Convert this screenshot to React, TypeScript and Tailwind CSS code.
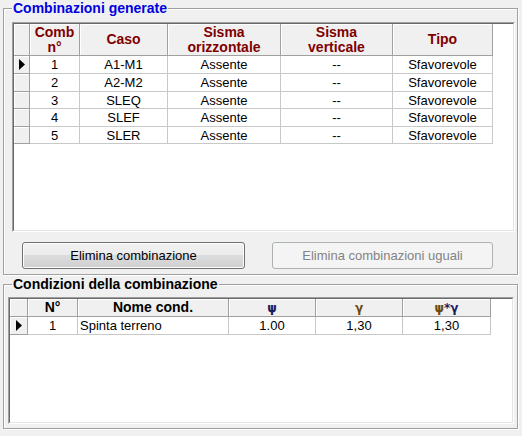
import React from "react";

type Col = { w: string; label: React.ReactNode; align?: string };

const combCols: Col[] = [
  { w: "w-[50px]", label: <>Comb<br />n°</> },
  { w: "w-[88px]", label: "Caso" },
  { w: "w-[113px]", label: <>Sisma<br />orizzontale</> },
  { w: "w-[112px]", label: <>Sisma<br />verticale</> },
  { w: "w-[100px]", label: "Tipo" },
];

const combRows = [
  ["1", "A1-M1", "Assente", "--", "Sfavorevole"],
  ["2", "A2-M2", "Assente", "--", "Sfavorevole"],
  ["3", "SLEQ", "Assente", "--", "Sfavorevole"],
  ["4", "SLEF", "Assente", "--", "Sfavorevole"],
  ["5", "SLER", "Assente", "--", "Sfavorevole"],
];
const combRowH = ["h-[18px]", "h-[18px]", "h-[17px]", "h-[18px]", "h-[17px]"];

const greek = "font-['DejaVu_Sans',sans-serif] text-[12px]";

const condCols: Col[] = [
  { w: "w-[50px]", label: "N°" },
  { w: "w-[151px]", label: "Nome cond.", align: "justify-start pl-[2px]" },
  { w: "w-[87px]", label: <span className={`${greek} text-[#1c1c60]`}>ψ</span> },
  { w: "w-[87px]", label: <span className={`${greek} text-[#6a4a10]`}>γ</span> },
  {
    w: "w-[88px]",
    label: (
      <span className={greek}>
        <span className="text-[#6a4a10]">ψ</span>
        <span className="text-[#1c1c60]">*</span>
        <span className="text-[#1c1c60]">γ</span>
      </span>
    ),
  },
];

const condRows = [["1", "Spinta terreno", "1.00", "1,30", "1,30"]];

function Arrow() {
  return (
    <svg width="6" height="11" viewBox="0 0 6 11">
      <polygon points="0,0 6,5.5 0,11" fill="#000" />
    </svg>
  );
}

function Grid({
  cols,
  rows,
  indW,
  headH,
  rowH,
  headColor,
  className,
}: {
  cols: Col[];
  rows: string[][];
  indW: string;
  headH: string;
  rowH: string[];
  headColor: string;
  className: string;
}) {
  const fixed =
    "bg-[#f0f0f0] border-r border-b border-r-[#a0a0a0] border-b-[#a0a0a0] shadow-[inset_1px_1px_0_#ffffff] shrink-0";
  return (
    <div className={`border border-t-[#a0a0a0] border-l-[#a0a0a0] border-r-white border-b-white ${className}`}>
      <div className="h-full border border-t-[#696969] border-l-[#696969] border-r-[#e3e3e3] border-b-[#e3e3e3] bg-white overflow-hidden">
        <div className={`flex ${headH}`}>
          <div className={`${indW} ${fixed}`} />
          {cols.map((c, i) => (
            <div
              key={i}
              className={`${c.w} ${fixed} flex items-center justify-center text-center text-[14px] font-bold leading-[15px] ${headColor}`}
            >
              <div>{c.label}</div>
            </div>
          ))}
        </div>
        {rows.map((r, ri) => (
          <div key={ri} className={`flex ${rowH[ri]}`}>
            <div className={`${indW} ${fixed} flex items-center justify-center`}>{ri === 0 && <Arrow />}</div>
            {r.map((v, ci) => (
              <div
                key={ci}
                className={`${cols[ci].w} shrink-0 border-r border-b border-[#c8c8c8] flex items-center ${cols[ci].align || "justify-center"} text-[13px] leading-[15px] text-black`}
              >
                {v}
              </div>
            ))}
          </div>
        ))}
      </div>
    </div>
  );
}

const fieldset =
  "border border-t-[#a0a0a0] border-l-[#a0a0a0] border-r-[#a0a0a0] border-b-[#a0a0a0] shadow-[inset_1px_1px_0_#ffffff,1px_1px_0_#ffffff]";

export default function App() {
  return (
    <div className="w-[522px] h-[436px] bg-[#f0f0f0] pl-[3px] pr-[4px] font-['Liberation_Sans',Arial,sans-serif] text-black overflow-hidden">
      <fieldset className={`${fieldset} h-[275px] w-[515px]`}>
        <legend className="ml-[8px] px-[1px] text-[14px] font-bold leading-[16px] text-[#0000e0] bg-[#f0f0f0]">
          Combinazioni generate
        </legend>
        <Grid
          cols={combCols}
          rows={combRows}
          indW="w-[16px]"
          headH="h-[32px]"
          rowH={combRowH}
          headColor="text-[#800000]"
          className="mt-[6px] ml-[8px] w-[503px] h-[210px]"
        />
        <div className="flex mt-[10px] ml-[18px] gap-[27px]">
          <button className="w-[223px] h-[27px] rounded-[3px] border border-[#707070] bg-[linear-gradient(#f2f2f2_0%,#ebebeb_50%,#dddddd_50%,#cfcfcf_100%)] shadow-[inset_0_0_0_1px_#fcfcfc] text-[13px] text-black">
            Elimina combinazione
          </button>
          <button
            disabled
            className="w-[221px] h-[27px] rounded-[3px] border border-[#adb2b5] bg-[#f4f4f4] text-[13px] text-[#838383]"
          >
            Elimina combinazioni uguali
          </button>
        </div>
      </fieldset>
      <fieldset className={`${fieldset} mt-[1px] h-[153px] w-[515px]`}>
        <legend className="ml-[8px] px-[1px] text-[14px] font-bold leading-[16px] text-black bg-[#f0f0f0]">
          Condizioni della combinazione
        </legend>
        <Grid
          cols={condCols}
          rows={condRows}
          indW="w-[18px]"
          headH="h-[18px]"
          rowH={["h-[18px]"]}
          headColor="text-black"
          className="mt-[5px] ml-[4px] w-[506px] h-[127px]"
        />
      </fieldset>
    </div>
  );
}
